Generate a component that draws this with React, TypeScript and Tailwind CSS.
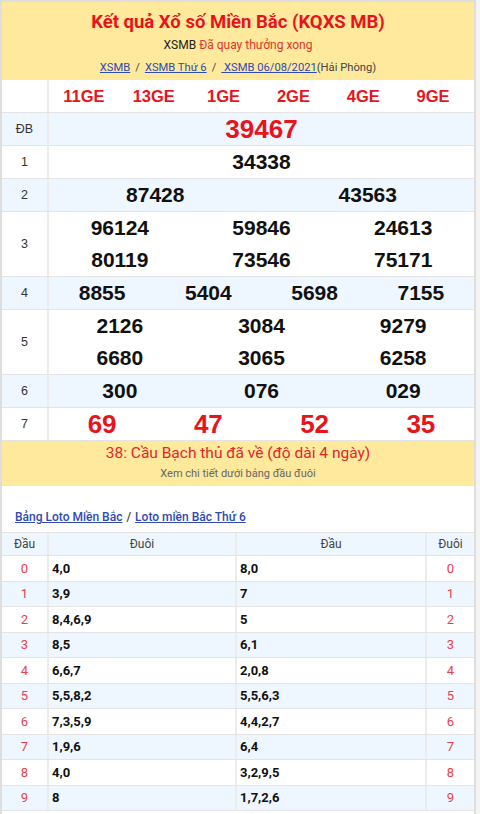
import React from 'react';

const prizes: { label: string; nums: string[][]; red?: boolean; big?: boolean }[] = [
  { label: 'ĐB', nums: [['39467']], red: true },
  { label: '1', nums: [['34338']] },
  { label: '2', nums: [['87428', '43563']] },
  { label: '3', nums: [['96124', '59846', '24613'], ['80119', '73546', '75171']] },
  { label: '4', nums: [['8855', '5404', '5698', '7155']] },
  { label: '5', nums: [['2126', '3084', '9279'], ['6680', '3065', '6258']] },
  { label: '6', nums: [['300', '076', '029']] },
  { label: '7', nums: [['69', '47', '52', '35']], red: true },
];

const codes = ['11GE', '13GE', '1GE', '2GE', '4GE', '9GE'];

const loto = [
  ['4,0', '8,0'],
  ['3,9', '7'],
  ['8,4,6,9', '5'],
  ['8,5', '6,1'],
  ['6,6,7', '2,0,8'],
  ['5,5,8,2', '5,5,6,3'],
  ['7,3,5,9', '4,4,2,7'],
  ['1,9,6', '6,4'],
  ['4,0', '3,2,9,5'],
  ['8', '1,7,2,6'],
];

const numFont = { fontFamily: '"Liberation Sans", Arial, sans-serif' };

export default function App() {
  return (
    <div className="w-[480px] h-[814px] overflow-hidden bg-[#f4f4f4] flex" style={{ fontFamily: 'Roboto, "Liberation Sans", sans-serif' }}>
      <div className="w-[476px] border-l-2 border-t-2 border-r-2 border-[#dedede] bg-white flex flex-col">
        {/* header */}
        <div className="bg-[#ffe99c] h-[78px] flex flex-col items-center pt-[7px]">
          <h1 className="text-[18.5px] font-bold text-[#e8141c] leading-[26px]">Kết quả Xổ số Miền Bắc (KQXS MB)</h1>
          <p className="text-[12px] leading-[18px] mt-[1px] text-[#222]">
            XSMB <span className="text-[#e0352b]">Đã quay thưởng xong</span>
          </p>
          <p className="text-[11.2px] leading-[18px] mt-[5px] text-[#444]">
            <a href="#" className="text-[#2f4ab0] underline">XSMB</a>
            <span className="mx-[5px]">/</span>
            <a href="#" className="text-[#2f4ab0] underline">XSMB Thứ 6</a>
            <span className="mx-[5px]">/</span>
            <a href="#" className="text-[#2f4ab0] underline"> XSMB 06/08/2021</a>(Hải Phòng)
          </p>
        </div>

        {/* results table */}
        <div style={numFont}>
          <div className="flex h-[33px] border-b border-[#e4e4e4]">
            <div className="w-[47px] border-r-2 border-[#ececec]" />
            <div className="flex-1 grid grid-cols-6 items-center text-[16.5px] font-bold text-[#e8141c] pr-[6px]">
              {codes.map((c) => (
                <span key={c} className="text-center">{c}</span>
              ))}
            </div>
          </div>
          {prizes.map((p, i) => (
            <div
              key={p.label}
              className={`flex border-b border-[#e4e4e4] ${i % 2 === 0 ? 'bg-[#eef6ff]' : 'bg-white'}`}
            >
              <div className="w-[47px] border-r-2 border-[#ececec] flex items-center justify-center text-[12.5px] text-[#333]">
                {p.label}
              </div>
              <div className="flex-1 flex flex-col">
                {p.nums.map((line, j) => (
                  <div
                    key={j}
                    className={`flex items-center h-[32px] font-bold ${p.red ? 'text-[#e8141c] text-[26px]' : 'text-[#111] text-[21px]'}`}
                  >
                    {line.map((n, k) => (
                      <span key={k} className="flex-1 text-center">{n}</span>
                    ))}
                  </div>
                ))}
              </div>
            </div>
          ))}
        </div>

        {/* banner */}
        <div className="bg-[#ffe99c] h-[45px] flex flex-col items-center pt-[2px]">
          <p className="text-[15.5px] leading-[20px] text-[#e0282e]">38: Cầu Bạch thủ đã về (độ dài 4 ngày)</p>
          <p className="text-[11px] leading-[16px] mt-[3px] text-[#666]">Xem chi tiết dưới bảng đầu đuôi</p>
        </div>

        {/* loto links */}
        <div className="h-[46px] flex items-end pb-[6px] pl-[13px] text-[12px] font-medium text-[#444]">
          <a href="#" className="text-[#2f4ab0] underline">Bảng Loto Miền Bắc</a>
          <span className="mx-[4px]">/</span>
          <a href="#" className="text-[#2f4ab0] underline">Loto miền Bắc Thứ 6</a>
        </div>

        {/* loto table */}
        <div className="border-t border-[#e4e4e4]">
          <div className="flex h-[23px] bg-[#eef6ff] border-b border-[#e4e4e4] text-[12px] text-[#444]">
            <div className="w-[47px] border-r-2 border-[#ececec] flex items-center justify-center">Đầu</div>
            <div className="w-[188px] border-r-2 border-[#ececec] flex items-center justify-center">Đuôi</div>
            <div className="w-[190px] border-r-2 border-[#ececec] flex items-center justify-center">Đầu</div>
            <div className="flex-1 flex items-center justify-center">Đuôi</div>
          </div>
          {loto.map((r, i) => (
            <div
              key={i}
              className={`flex h-[25.5px] border-b border-[#e4e4e4] text-[13px] ${i % 2 === 1 ? 'bg-[#eef6ff]' : 'bg-white'}`}
            >
              <div className="w-[47px] border-r-2 border-[#ececec] flex items-center justify-center text-[#e8414a]">{i}</div>
              <div className="w-[188px] border-r-2 border-[#ececec] flex items-center pl-[3px] font-bold text-[#111]">{r[0]}</div>
              <div className="w-[190px] border-r-2 border-[#ececec] flex items-center pl-[3px] font-bold text-[#111]">{r[1]}</div>
              <div className="flex-1 flex items-center justify-center text-[#e8414a]">{i}</div>
            </div>
          ))}
        </div>
      </div>
    </div>
  );
}
